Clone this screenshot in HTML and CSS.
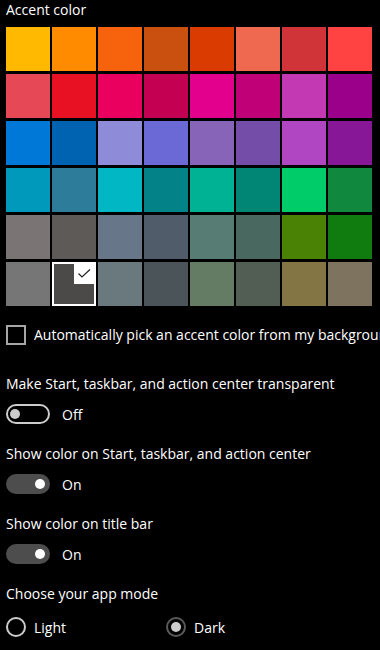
FILE: index.html
```html
<!DOCTYPE html>
<html>
<head>
    <title>Colors | Personalization</title>
    <link rel="stylesheet" href="styles.css">
</head>
<body>
    <div class="page">
        <div class="label top-label">Accent color</div>
        <div class="swatches">
            <div class="swatch" style="background:#ffb900"></div>
            <div class="swatch" style="background:#ff8c00"></div>
            <div class="swatch" style="background:#f7630c"></div>
            <div class="swatch" style="background:#ca5010"></div>
            <div class="swatch" style="background:#da3b01"></div>
            <div class="swatch" style="background:#ef6950"></div>
            <div class="swatch" style="background:#d13438"></div>
            <div class="swatch" style="background:#ff4343"></div>

            <div class="swatch" style="background:#e74856"></div>
            <div class="swatch" style="background:#e81123"></div>
            <div class="swatch" style="background:#ea005e"></div>
            <div class="swatch" style="background:#c30052"></div>
            <div class="swatch" style="background:#e3008c"></div>
            <div class="swatch" style="background:#bf0077"></div>
            <div class="swatch" style="background:#c239b3"></div>
            <div class="swatch" style="background:#9a0089"></div>

            <div class="swatch" style="background:#0078d7"></div>
            <div class="swatch" style="background:#0063b1"></div>
            <div class="swatch" style="background:#8e8cd8"></div>
            <div class="swatch" style="background:#6b69d6"></div>
            <div class="swatch" style="background:#8764b8"></div>
            <div class="swatch" style="background:#744da9"></div>
            <div class="swatch" style="background:#b146c2"></div>
            <div class="swatch" style="background:#881798"></div>

            <div class="swatch" style="background:#0099bc"></div>
            <div class="swatch" style="background:#2d7d9a"></div>
            <div class="swatch" style="background:#00b7c3"></div>
            <div class="swatch" style="background:#038387"></div>
            <div class="swatch" style="background:#00b294"></div>
            <div class="swatch" style="background:#018574"></div>
            <div class="swatch" style="background:#00cc6a"></div>
            <div class="swatch" style="background:#10893e"></div>

            <div class="swatch" style="background:#7a7574"></div>
            <div class="swatch" style="background:#5d5a58"></div>
            <div class="swatch" style="background:#68768a"></div>
            <div class="swatch" style="background:#515c6b"></div>
            <div class="swatch" style="background:#567c73"></div>
            <div class="swatch" style="background:#486860"></div>
            <div class="swatch" style="background:#498205"></div>
            <div class="swatch" style="background:#107c10"></div>

            <div class="swatch" style="background:#767676"></div>
            <div class="swatch selected" style="background:#4c4a48">
                <span class="tick">
                    <svg width="20" height="20" viewBox="0 0 20 20">
                        <path d="M4.5 9.5 L8 13 L16 5.5" fill="none" stroke="#222" stroke-width="1.2"/>
                    </svg>
                </span>
            </div>
            <div class="swatch" style="background:#69797e"></div>
            <div class="swatch" style="background:#4a5459"></div>
            <div class="swatch" style="background:#647c64"></div>
            <div class="swatch" style="background:#525e54"></div>
            <div class="swatch" style="background:#847545"></div>
            <div class="swatch" style="background:#7e735f"></div>
        </div>

        <div class="check-row">
            <span class="checkbox"></span>
            <span class="check-text">Automatically pick an accent color from my background</span>
        </div>

        <div class="setting first">
            <div class="label">Make Start, taskbar, and action center transparent</div>
            <div class="toggle-row">
                <span class="toggle"><span class="knob"></span></span>
                <span>Off</span>
            </div>
        </div>

        <div class="setting">
            <div class="label">Show color on Start, taskbar, and action center</div>
            <div class="toggle-row">
                <span class="toggle on"><span class="knob"></span></span>
                <span>On</span>
            </div>
        </div>

        <div class="setting">
            <div class="label">Show color on title bar</div>
            <div class="toggle-row">
                <span class="toggle on"><span class="knob"></span></span>
                <span>On</span>
            </div>
        </div>

        <div class="setting">
            <div class="label">Choose your app mode</div>
            <div class="radio-row">
                <div class="radio-item"><span class="radio"></span>Light</div>
                <div class="radio-item"><span class="radio checked"></span>Dark</div>
            </div>
        </div>
    </div>
</body>
</html>
```

FILE: styles.css
```css
html, body { margin: 0; padding: 0; background: #000; }
body { font-family: "Open Sans", "Noto Sans", Arial, sans-serif; font-size: 14px; color: #fff; overflow: hidden; }
.page { padding: 0 6px; width: 374px; height: 650px; overflow: hidden; }

.label { line-height: 20px; white-space: nowrap; }
.top-label { line-height: 19px; }

.swatches {
    display: grid;
    grid-template-columns: repeat(8, 44px);
    grid-auto-rows: 44px;
    column-gap: 2px;
    row-gap: 3px;
    margin-top: 8px;
}
.swatch { position: relative; }
.swatch.selected { box-sizing: border-box; border: 2px solid #fff; }
.tick { position: absolute; top: 0; right: 0; width: 20px; height: 20px; background: #fff; }
.tick svg { display: block; }

.check-row { display: flex; align-items: center; gap: 8px; margin-top: 19px; height: 20px; white-space: nowrap; }
.checkbox { flex: none; width: 20px; height: 20px; box-sizing: border-box; border: 2px solid #a6a6a6; }
.check-text { line-height: 20px; }

.setting { margin-top: 20px; }
.setting.first { margin-top: 29px; }

.toggle-row { display: flex; align-items: center; gap: 12px; margin-top: 10px; height: 20px; }
.toggle {
    flex: none;
    display: flex;
    align-items: center;
    width: 44px;
    height: 20px;
    box-sizing: border-box;
    border: 2px solid #cccccc;
    border-radius: 10px;
    padding: 0 2px;
}
.knob { width: 10px; height: 10px; border-radius: 50%; background: #cccccc; }
.toggle.on { background: #4d4d4d; border-color: #4d4d4d; justify-content: flex-end; padding: 0 3px; }
.toggle.on .knob { background: #fff; }

.radio-row { display: flex; margin-top: 13px; height: 20px; }
.radio-item { display: flex; align-items: center; gap: 8px; width: 160px; }
.radio {
    flex: none;
    display: flex;
    align-items: center;
    justify-content: center;
    width: 20px;
    height: 20px;
    box-sizing: border-box;
    border: 2px solid #cccccc;
    border-radius: 50%;
}
.radio.checked { border-color: #5a5a5a; }
.radio.checked::after { content: ""; width: 10px; height: 10px; border-radius: 50%; background: #cccccc; }
```
